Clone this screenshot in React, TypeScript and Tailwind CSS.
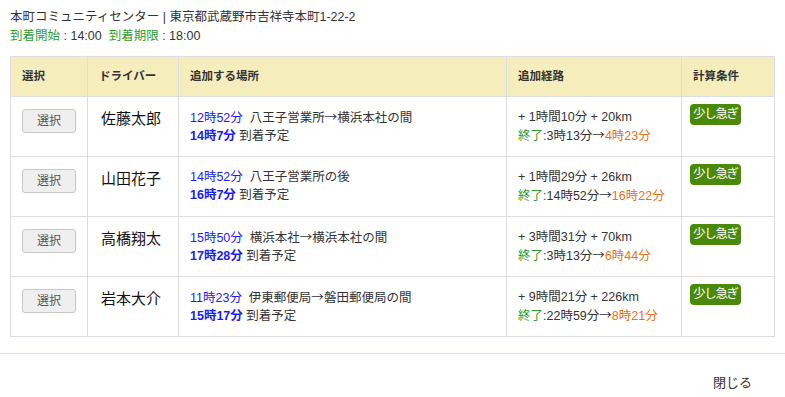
import React from 'react';

type Row = {
  name: string;
  depart: string;
  from: string;
  to?: string;
  suffix: string;
  arrive: string;
  route: string;
  endFrom: string;
  endTo: string;
};

const rows: Row[] = [
  { name: '佐藤太郎', depart: '12時52分', from: '八王子営業所', to: '横浜本社', suffix: 'の間', arrive: '14時7分', route: '+ 1時間10分 + 20km', endFrom: '3時13分', endTo: '4時23分' },
  { name: '山田花子', depart: '14時52分', from: '八王子営業所', suffix: 'の後', arrive: '16時7分', route: '+ 1時間29分 + 26km', endFrom: '14時52分', endTo: '16時22分' },
  { name: '高橋翔太', depart: '15時50分', from: '横浜本社', to: '横浜本社', suffix: 'の間', arrive: '17時28分', route: '+ 3時間31分 + 70km', endFrom: '3時13分', endTo: '6時44分' },
  { name: '岩本大介', depart: '11時23分', from: '伊東郵便局', to: '磐田郵便局', suffix: 'の間', arrive: '15時17分', route: '+ 9時間21分 + 226km', endFrom: '22時59分', endTo: '8時21分' },
];

const font = { fontFamily: '"Liberation Sans", "Noto Sans CJK JP", sans-serif' };
const cjk = { fontFamily: '"Noto Sans CJK JP", sans-serif' };

const Arrow = () => <span style={cjk}>→</span>;

export default function App() {
  return (
    <div className="w-[785px] h-[397px] bg-white text-[#333] overflow-hidden" style={font}>
      <div className="px-[10px] pt-[8px]">
        <p className="text-[12.5px] leading-[19px]">本町コミュニティセンター | 東京都武蔵野市吉祥寺本町1-22-2</p>
        <p className="text-[12.5px] leading-[19px]">
          <span className="text-[#2e9e2e]">到着開始</span> : 14:00&nbsp;&nbsp;<span className="text-[#2e9e2e]">到着期限</span> : 18:00
        </p>
        <table className="mt-[10px] w-[764px] border-collapse table-fixed text-[12.5px]">
          <colgroup>
            <col className="w-[77px]" />
            <col className="w-[91px]" />
            <col className="w-[328px]" />
            <col className="w-[175px]" />
            <col className="w-[93px]" />
          </colgroup>
          <thead>
            <tr className="h-[40px] bg-[#f5edbb]">
              {['選択', 'ドライバー', '追加する場所', '追加経路', '計算条件'].map((h) => (
                <th key={h} className="border border-[#dddde3] px-[11px] text-left font-bold text-[11.5px] text-[#333]">
                  {h}
                </th>
              ))}
            </tr>
          </thead>
          <tbody>
            {rows.map((r) => (
              <tr key={r.name} className="h-[60px]">
                <td className="border border-[#dddde3] align-top pt-[12px] text-center">
                  <button className="w-[54px] h-[24px] rounded-[3px] border border-[#c8c8c8] bg-[#efefef] text-[12px] text-[#555]">
                    選択
                  </button>
                </td>
                <td className="border border-[#dddde3] align-top pl-[13px] pt-[11px] text-left text-[15px] text-[#111]">
                  {r.name}
                </td>
                <td className="border border-[#dddde3] align-top px-[11px] pt-[11px] leading-[18px] whitespace-nowrap">
                  <div>
                    <span className="text-[#1a1aff]">{r.depart}</span>&nbsp;&nbsp;{r.from}
                    {r.to && (
                      <>
                        <Arrow />
                        {r.to}
                      </>
                    )}
                    {r.suffix}
                  </div>
                  <div>
                    <span className="text-[#1a1aff] font-bold">{r.arrive}</span> 到着予定
                  </div>
                </td>
                <td className="border border-[#dddde3] align-top px-[11px] pt-[11px] leading-[18px] whitespace-nowrap">
                  <div>{r.route}</div>
                  <div>
                    <span className="text-[#2e9e2e]">終了</span>:{r.endFrom}
                    <Arrow />
                    <span className="text-[#e8701a]">{r.endTo}</span>
                  </div>
                </td>
                <td className="border border-[#dddde3] align-top px-[8px] pt-[7px]">
                  <span className="inline-block rounded-[4px] bg-[#4a8a0a] px-[3px] text-[12.5px] tracking-[-1.3px] leading-[21px] text-white">
                    少し急ぎ
                  </span>
                </td>
              </tr>
            ))}
          </tbody>
        </table>
      </div>
      <div className="mt-[16px] border-t border-[#e0e0e0] flex justify-end pr-[33px] pt-[19px]">
        <button className="text-[13px] text-[#333]">閉じる</button>
      </div>
    </div>
  );
}
